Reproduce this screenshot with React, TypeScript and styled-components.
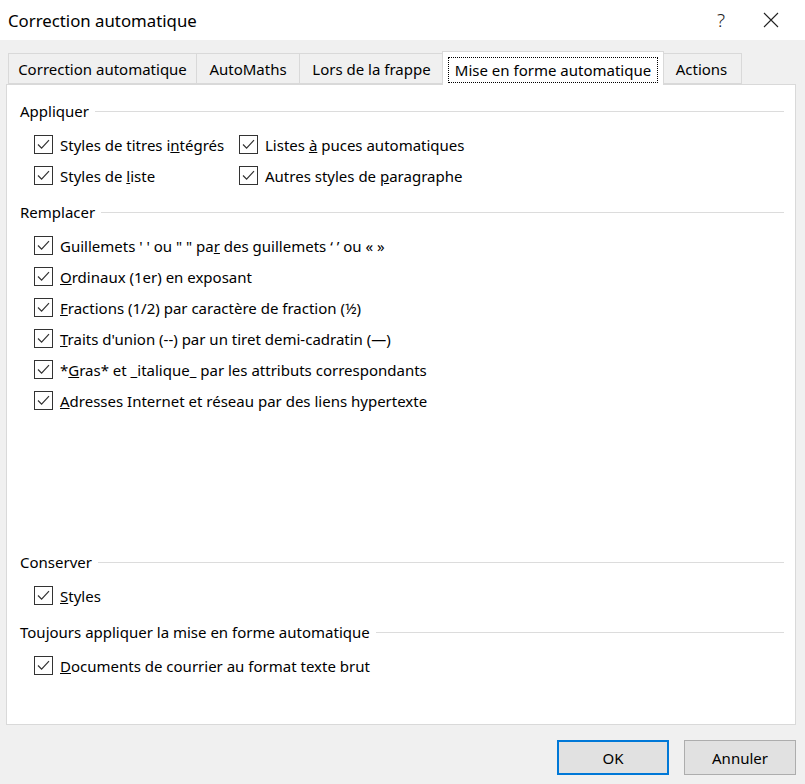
import React, { useState } from 'react';
import styled, { createGlobalStyle } from 'styled-components';

const GlobalStyle = createGlobalStyle`
  html, body {
    margin: 0;
    padding: 0;
    background: #f0f0f0;
  }
  body {
    font-family: 'Noto Sans', 'Open Sans', sans-serif;
    color: #000;
  }
`;

const Dialog = styled.div`
  width: 805px;
  height: 784px;
  background: #f0f0f0;
  display: flex;
  flex-direction: column;
`;

const TitleBar = styled.div`
  height: 40px;
  background: #fff;
  display: flex;
  align-items: center;
  padding-left: 8px;
`;

const Title = styled.div`
  flex: 1;
  font-size: 16.8px;
  color: #000;
`;

const TitleButton = styled.button`
  width: 46px;
  height: 40px;
  border: none;
  background: transparent;
  display: flex;
  align-items: center;
  justify-content: center;
  padding: 0;
  font-family: 'Noto Sans', sans-serif;
  font-size: 19px;
  font-weight: 300;
  color: #222;
  margin-left: 22px;
  &:last-child {
    margin-left: 4px;
    margin-right: 11px;
  }
`;

const Body = styled.div`
  flex: 1;
  padding: 11px 9px 9px 6px;
  display: flex;
  flex-direction: column;
`;

const TabStrip = styled.div`
  display: flex;
  align-items: flex-end;
  height: 33px;
  padding-left: 2px;
  position: relative;
  z-index: 1;
`;

// largeur de chaque onglet comme dans la boîte Win32
const Tab = styled.div<{ $active?: boolean; $width: number }>`
  width: ${p => p.$width + (p.$active ? 4 : 0)}px;
  height: ${p => (p.$active ? 34 : 31)}px;
  margin-bottom: ${p => (p.$active ? -1 : 0)}px;
  box-sizing: border-box;
  border: 1px solid #d9d9d9;
  border-bottom: ${p => (p.$active ? 'none' : '1px solid #d9d9d9')};
  margin-left: ${p => (p.$active ? -2 : -1)}px;
  margin-right: ${p => (p.$active ? -2 : 0)}px;
  background: ${p => (p.$active ? '#fff' : '#f0f0f0')};
  padding: ${p => (p.$active ? '3px 0 1px' : '0')};
  display: flex;
  align-items: center;
  justify-content: center;
  font-size: 15px;
  color: #000;
  white-space: nowrap;
  position: relative;
  z-index: ${p => (p.$active ? 2 : 1)};
  &:first-child {
    margin-left: 0;
  }
`;

const FocusLabel = styled.span`
  border: 1px dotted #000;
  padding: 2px 0;
  width: calc(100% - 12px);
  text-align: center;
  line-height: 20px;
`;

const Panel = styled.div`
  height: 641px;
  box-sizing: border-box;
  background: #fff;
  border: 1px solid #d9d9d9;
  padding: 15px 11px 43px 13px;
  display: flex;
  flex-direction: column;
`;

const Section = styled.div<{ $spacing: 'none' | 'gap' | 'push' }>`
  display: flex;
  flex-direction: column;
  margin-top: ${p => (p.$spacing === 'push' ? 'auto' : p.$spacing === 'gap' ? '10px' : '0')};
`;

const SectionHeader = styled.div`
  height: 22px;
  display: flex;
  align-items: center;
  font-size: 15px;
  gap: 6px;
  &::after {
    content: '';
    flex: 1;
    height: 1px;
    background: #dcdcdc;
    margin-top: 1px;
  }
`;

const Options = styled.div<{ $columns?: number }>`
  margin-top: 7px;
  padding-left: 14px;
  display: grid;
  grid-template-columns: ${p => (p.$columns === 2 ? '205px 1fr' : '1fr')};
`;

const OptionRow = styled.label`
  height: 31px;
  display: flex;
  align-items: center;
  gap: 7px;
  font-size: 15px;
  color: #000;
  white-space: nowrap;
  cursor: default;
`;

const Box = styled.span`
  width: 19px;
  height: 19px;
  box-sizing: border-box;
  border: 1px solid #333;
  background: #fff;
  display: flex;
  align-items: center;
  justify-content: center;
  flex-shrink: 0;
`;

const Footer = styled.div`
  display: flex;
  justify-content: flex-end;
  gap: 15px;
  margin-top: 15px;
`;

const DialogButton = styled.button<{ $primary?: boolean }>`
  width: 112px;
  height: 35px;
  box-sizing: border-box;
  background: #e1e1e1;
  border: ${p => (p.$primary ? '2px solid #0078d7' : '1px solid #adadad')};
  font-family: 'Noto Sans', sans-serif;
  font-size: 15px;
  color: #000;
  padding: 0;
`;

const Check: React.FC<{ on: boolean }> = ({ on }) => (
  <Box>
    {on && (
      <svg width="13" height="11" viewBox="0 0 13 11">
        <path d="M1 5.5 L4.6 9.2 L12 1.2" fill="none" stroke="#333" strokeWidth="1.2" />
      </svg>
    )}
  </Box>
);

type Option = { id: string; label: React.ReactNode };

const Checkbox: React.FC<{ option: Option; checked: boolean; onToggle: (id: string) => void }> = ({
  option,
  checked,
  onToggle,
}) => (
  <OptionRow onClick={() => onToggle(option.id)}>
    <Check on={checked} />
    <span>{option.label}</span>
  </OptionRow>
);

const appliquer: Option[] = [
  { id: 'titres', label: <>Styles de titres i<u>n</u>tégrés</> },
  { id: 'puces', label: <>Listes <u>à</u> puces automatiques</> },
  { id: 'liste', label: <>Styles de <u>l</u>iste</> },
  { id: 'para', label: <>Autres styles de <u>p</u>aragraphe</> },
];

const remplacer: Option[] = [
  { id: 'guill', label: <>Guillemets ' ' ou " " pa<u>r</u> des guillemets ‘ ’ ou « »</> },
  { id: 'ord', label: <><u>O</u>rdinaux (1er) en exposant</> },
  { id: 'frac', label: <><u>F</u>ractions (1/2) par caractère de fraction (½)</> },
  { id: 'traits', label: <><u>T</u>raits d'union (--) par un tiret demi-cadratin (—)</> },
  { id: 'gras', label: <>*<u>G</u>ras* et _italique_ par les attributs correspondants</> },
  { id: 'web', label: <><u>A</u>dresses Internet et réseau par des liens hypertexte</> },
];

const conserver: Option[] = [{ id: 'styles', label: <><u>S</u>tyles</> }];

const toujours: Option[] = [
  { id: 'courrier', label: <><u>D</u>ocuments de courrier au format texte brut</> },
];

const tabs = [
  { label: 'Correction automatique', width: 189 },
  { label: 'AutoMaths', width: 104 },
  { label: 'Lors de la frappe', width: 145 },
  { label: 'Mise en forme automatique', width: 218 },
  { label: 'Actions', width: 81 },
];

const App: React.FC = () => {
  const [activeTab, setActiveTab] = useState(3);
  const [unchecked, setUnchecked] = useState<Record<string, boolean>>({});

  const toggle = (id: string) => setUnchecked(prev => ({ ...prev, [id]: !prev[id] }));

  const renderOptions = (list: Option[]) =>
    list.map(o => <Checkbox key={o.id} option={o} checked={!unchecked[o.id]} onToggle={toggle} />);

  return (
    <Dialog>
      <GlobalStyle />
      <TitleBar>
        <Title>Correction automatique</Title>
        <TitleButton>?</TitleButton>
        <TitleButton>
          <svg width="16" height="16" viewBox="0 0 16 16">
            <path d="M1 1 L15 15 M15 1 L1 15" stroke="#222" strokeWidth="1.1" fill="none" />
          </svg>
        </TitleButton>
      </TitleBar>

      <Body>
        <TabStrip>
          {tabs.map((t, i) => (
            <Tab key={t.label} $width={t.width} $active={i === activeTab} onClick={() => setActiveTab(i)}>
              {i === activeTab ? <FocusLabel>{t.label}</FocusLabel> : t.label}
            </Tab>
          ))}
        </TabStrip>

        <Panel>
          <Section $spacing="none">
            <SectionHeader>Appliquer</SectionHeader>
            <Options $columns={2}>{renderOptions(appliquer)}</Options>
          </Section>
          <Section $spacing="gap">
            <SectionHeader>Remplacer</SectionHeader>
            <Options>{renderOptions(remplacer)}</Options>
          </Section>
          <Section $spacing="push">
            <SectionHeader>Conserver</SectionHeader>
            <Options>{renderOptions(conserver)}</Options>
          </Section>
          <Section $spacing="gap">
            <SectionHeader>Toujours appliquer la mise en forme automatique</SectionHeader>
            <Options>{renderOptions(toujours)}</Options>
          </Section>
        </Panel>

        <Footer>
          <DialogButton $primary>OK</DialogButton>
          <DialogButton>Annuler</DialogButton>
        </Footer>
      </Body>
    </Dialog>
  );
};

export default App;
